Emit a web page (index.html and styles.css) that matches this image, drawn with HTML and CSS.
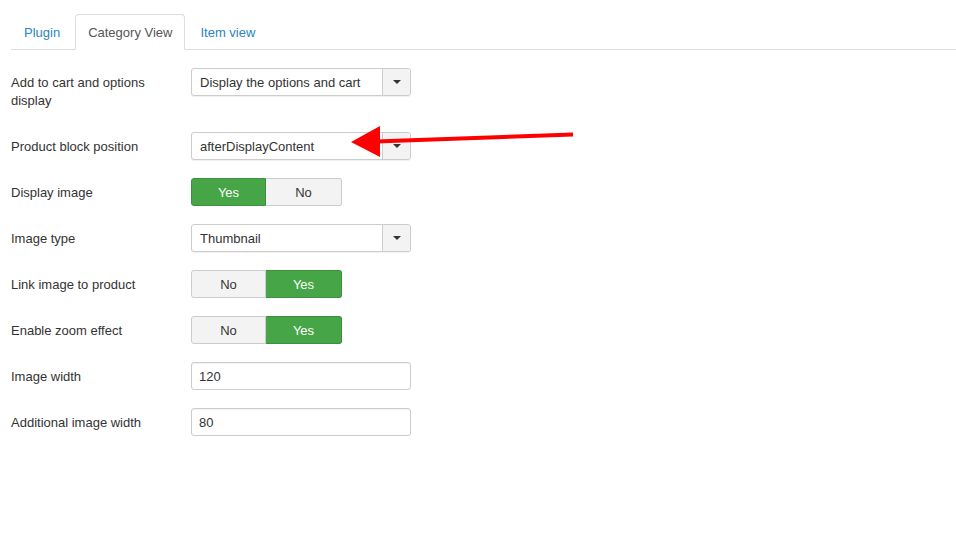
FILE: index.html
```html
<!DOCTYPE html>
<html>
<head>
<meta charset="utf-8">
<link rel="stylesheet" href="styles.css">
</head>
<body>
<div class="page">
  <ul class="tabs">
    <li class="tab"><a>Plugin</a></li>
    <li class="tab active"><a>Category View</a></li>
    <li class="tab"><a>Item view</a></li>
  </ul>
  <div class="form">
    <div class="group">
      <label class="label">Add to cart and options display</label>
      <div class="select"><span class="value">Display the options and cart</span><span class="caret-box"><span class="caret"></span></span></div>
    </div>
    <div class="group">
      <label class="label">Product block position</label>
      <div class="select"><span class="value">afterDisplayContent</span><span class="caret-box"><span class="caret"></span></span></div>
    </div>
    <div class="group">
      <label class="label">Display image</label>
      <div class="toggle"><span class="opt on">Yes</span><span class="opt">No</span></div>
    </div>
    <div class="group">
      <label class="label">Image type</label>
      <div class="select"><span class="value">Thumbnail</span><span class="caret-box"><span class="caret"></span></span></div>
    </div>
    <div class="group">
      <label class="label">Link image to product</label>
      <div class="toggle"><span class="opt">No</span><span class="opt on">Yes</span></div>
    </div>
    <div class="group">
      <label class="label">Enable zoom effect</label>
      <div class="toggle"><span class="opt">No</span><span class="opt on">Yes</span></div>
    </div>
    <div class="group">
      <label class="label">Image width</label>
      <div class="input">120</div>
    </div>
    <div class="group">
      <label class="label">Additional image width</label>
      <div class="input">80</div>
    </div>
  </div>
  <svg class="arrow" width="956" height="545" viewBox="0 0 956 545">
    <line x1="573" y1="134.5" x2="376" y2="141.5" stroke="#ff0000" stroke-width="4"/>
    <polygon points="351,142 380,126 380,157" fill="#ff0000"/>
  </svg>
</div>
</body>
</html>
```
FILE: styles.css
```css
html, body {
  margin: 0;
  padding: 0;
  background: #fff;
}
.page {
  position: relative;
  width: 956px;
  height: 545px;
  padding: 14px 0 0 11px;
  box-sizing: border-box;
  font-family: "Liberation Sans", Arial, sans-serif;
  font-size: 13px;
  line-height: 18px;
  color: #333;
}
.tabs {
  list-style: none;
  margin: 0;
  padding: 0;
  display: flex;
  border-bottom: 1px solid #ddd;
  height: 35px;
}
.tab {
  margin-bottom: -1px;
  margin-right: 2px;
}
.tab a {
  display: block;
  padding: 9px 12px 7px;
  line-height: 18px;
  border: 1px solid transparent;
  border-radius: 4px 4px 0 0;
  color: #2a84c6;
}
.tab.active a {
  color: #555;
  background: #fff;
  border-color: #ddd #ddd transparent;
}
.form {
  margin-top: 18px;
}
.group {
  display: flex;
  align-items: flex-start;
  margin-bottom: 18px;
}
.label {
  width: 160px;
  margin-right: 20px;
  padding: 6px 0 4px;
  line-height: 18px;
}
.select {
  width: 220px;
  height: 28px;
  box-sizing: border-box;
  border: 1px solid #ccc;
  border-radius: 3px;
  display: flex;
  align-items: stretch;
  background: #fff;
  box-shadow: 0 1px 1px rgba(0,0,0,0.06);
}
.select .value {
  flex: 1;
  padding: 5px 8px 3px;
  line-height: 18px;
}
.caret-box {
  width: 27px;
  border-left: 1px solid #ccc;
  background: #f3f3f3;
  display: flex;
  align-items: center;
  justify-content: center;
  border-radius: 0 3px 3px 0;
}
.caret {
  width: 0;
  height: 0;
  border-left: 4px solid transparent;
  border-right: 4px solid transparent;
  border-top: 4px solid #333;
}
.toggle {
  display: flex;
  height: 28px;
}
.opt {
  width: 75px;
  height: 28px;
  box-sizing: border-box;
  text-align: center;
  padding-top: 1px;
  line-height: 26px;
  border: 1px solid #ccc;
  background: #f3f3f3;
  color: #333;
  overflow: hidden;
}
.opt:first-child {
  border-radius: 3px 0 0 3px;
}
.opt:last-child {
  border-radius: 0 3px 3px 0;
  border-left: none;
  width: 76px;
}
.opt.on {
  background: #46a546;
  border-color: #3d8e3d;
  color: #fff;
}
.input {
  width: 220px;
  height: 28px;
  box-sizing: border-box;
  border: 1px solid #ccc;
  border-radius: 3px;
  padding: 5px 7px 3px;
  line-height: 18px;
  box-shadow: inset 0 1px 1px rgba(0,0,0,0.05);
}
.arrow {
  position: absolute;
  left: 0;
  top: 0;
  pointer-events: none;
}
```
